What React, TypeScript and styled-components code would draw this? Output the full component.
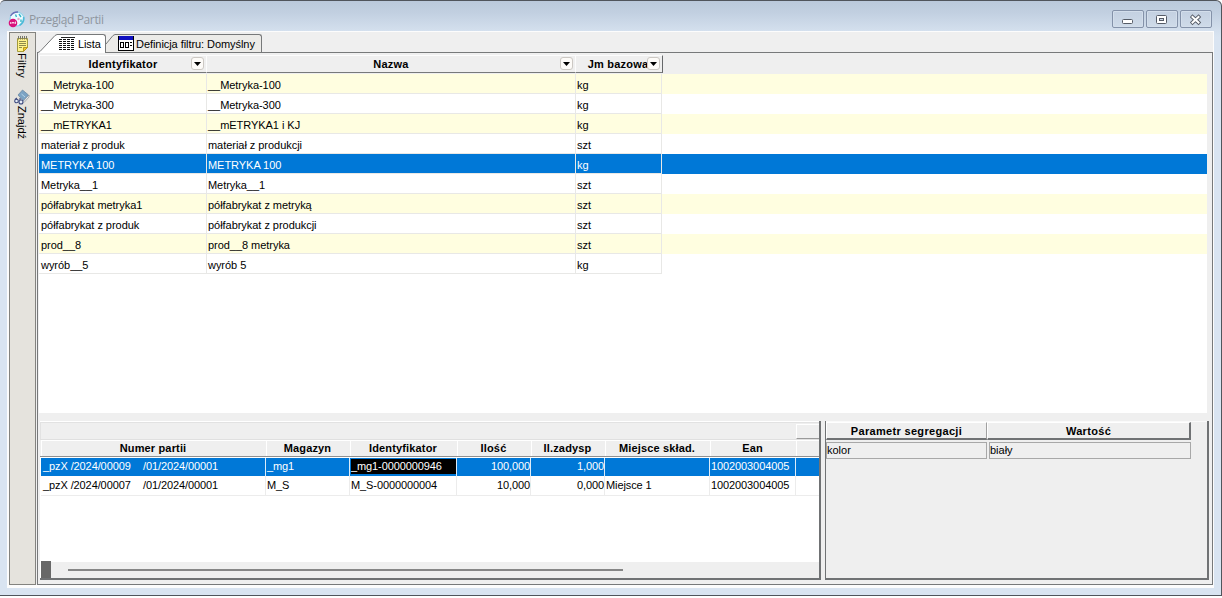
import React from "react";
import styled, { createGlobalStyle } from "styled-components";

const Global = createGlobalStyle`
  *, *::before, *::after { box-sizing: border-box; }
  body { margin: 0; background: #fff; overflow: hidden; }
`;

const Window = styled.div`
  width: 1222px;
  height: 596px;
  display: flex;
  flex-direction: column;
  padding: 0 7px 7px 7px;
  border: solid #50555c;
  border-width: 1px 1px 1px 0;
  border-radius: 5px 6px 0 0;
  background: linear-gradient(#bac9db 0, #c2d0e1 12px, #d3dfed 29px, #d9e4f1 36px);
  font-family: "Liberation Sans", Arial, sans-serif;
  font-size: 11px;
  color: #000;
`;

const TitleBar = styled.header`
  height: 30px;
  flex: none;
  display: flex;
  align-items: center;
  padding: 7px 2px 0 1px;
`;

const Title = styled.h1`
  flex: 1;
  margin: 0 0 0 4px;
  font: 400 12px "Open Sans", sans-serif;
  letter-spacing: -0.38px;
  line-height: 20px;
  color: #8f969f;
`;

const WindowButtons = styled.div`
  display: flex;
  gap: 2px;
`;

const WindowButton = styled.button`
  width: 32px;
  height: 18px;
  margin-top: -1px;
  padding: 1px 0 0;
  display: flex;
  align-items: center;
  justify-content: center;
  border: 1px solid #8492a9;
  border-radius: 2px;
  background: linear-gradient(#c3d0e1, #cfdbe9);
  box-shadow: inset 0 0 0 1px #d3deeb;
`;

const Client = styled.div`
  flex: 1;
  min-height: 0;
  display: flex;
  background: #efefef;
  border: solid #fcfcfc;
  border-width: 1px 1px 3px 2px;
`;

const Sidebar = styled.nav`
  width: 27px;
  display: flex;
  flex-direction: column;
  align-items: center;
  padding: 3px 1px 0 0;
  background: #e5e3dd;
  border: 1px solid #83837f;
`;

const SideItem = styled.div<{ $top?: number }>`
  display: flex;
  flex-direction: column;
  align-items: center;
  margin-top: ${(p) => p.$top ?? 0}px;
`;

const SideLabel = styled.span<{ $spacing: number }>`
  writing-mode: vertical-rl;
  line-height: 14px;
  margin-top: 1px;
  letter-spacing: ${(p) => p.$spacing}px;
`;

const Main = styled.main`
  flex: 1;
  min-width: 0;
  display: flex;
  flex-direction: column;
  padding-left: 1px;
`;

const TabStrip = styled.div`
  height: 20px;
  flex: none;
  display: flex;
  align-items: flex-end;
  padding-left: 1px;
`;

const TabSlope = styled.svg<{ $over?: boolean }>`
  display: block;
  flex: none;
  position: relative;
  z-index: 1;
  margin-bottom: ${(p) => (p.$over ? -1 : 0)}px;
`;

const Tab = styled.div<{ $active?: boolean }>`
  position: relative;
  z-index: ${(p) => (p.$active ? 1 : 0)};
  height: ${(p) => (p.$active ? 19 : 18)}px;
  margin-bottom: ${(p) => (p.$active ? -1 : 0)}px;
  width: ${(p) => (p.$active ? 49 : 147)}px;
  padding-left: ${(p) => (p.$active ? 2 : 3)}px;
  display: flex;
  align-items: center;
  background: ${(p) => (p.$active ? "#fff" : "#ecebe8")};
  border: solid #77797a;
  border-width: 1px 1px 0 0;
  border-radius: 0 3px 0 0;
`;

const TabText = styled.span<{ $left: number; $spacing: number }>`
  margin-left: ${(p) => p.$left}px;
  line-height: 14px;
  letter-spacing: ${(p) => p.$spacing}px;
  white-space: nowrap;
`;

const Page = styled.section`
  flex: 1;
  min-height: 0;
  display: flex;
  flex-direction: column;
  border: 1px solid #77797a;
  padding: 1px 5px 4px 1px;
`;

const Grid = styled.div`
  height: 359px;
  flex: none;
  background: #fff;
`;

const GridHeader = styled.div`
  display: flex;
  height: 20px;
  background: #efefef;
  padding-top: 1px;
`;

const GridHeadCell = styled.div<{ $w: number; $last?: boolean }>`
  width: ${(p) => p.$w}px;
  height: 18px;
  position: relative;
  display: flex;
  align-items: center;
  justify-content: center;
  font-weight: bold;
  letter-spacing: 0.22px;
  white-space: nowrap;
  overflow: hidden;
  border: solid #fcfcfc;
  border-width: 1px 0 1.5px 1px;
  border-bottom-color: #77797a;
  ${(p) => p.$last && "border-right: 1px solid #66686a; padding-right: 2px;"}
`;

const FilterButton = styled.button`
  position: absolute;
  right: 2px;
  top: 1px;
  width: 13px;
  height: 13px;
  padding: 0;
  display: flex;
  align-items: center;
  justify-content: center;
  background: #fdfbf8;
  border: 1px solid #ccc8c3;
  border-radius: 3px;
`;

const GridRow = styled.div<{ $tone: "odd" | "even" | "selected" }>`
  display: flex;
  height: 20px;
  background: ${(p) => ({ odd: "#fffee0", even: "#fff", selected: "#0078d7" })[p.$tone]};
  color: ${(p) => (p.$tone === "selected" ? "#fff" : "#000")};
`;

const GridCell = styled.div<{ $w: number; $first?: boolean }>`
  width: ${(p) => p.$w}px;
  padding-left: ${(p) => (p.$first ? 2 : 1)}px;
  padding-top: 1px;
  line-height: 21px;
  letter-spacing: -0.04px;
  white-space: pre;
  border: solid #e8e8e6;
  border-width: 0 1px 1px 0;
`;

const Lower = styled.div`
  flex: 1;
  min-height: 0;
  display: flex;
  gap: 4px;
  padding-top: 8px;
  padding-left: 1px;
  margin-right: -2px;
`;

const Batches = styled.div`
  width: 781px;
  display: flex;
  flex-direction: column;
  border: solid #707274;
  border-width: 0 2px 2px 0;
  background: #fff;
`;

const BatchBand = styled.div`
  height: 18px;
  display: flex;
  justify-content: flex-end;
  padding-top: 3px;
  background: #efefef;
  box-shadow: inset 0 1px #fff, inset 1px 2px #e2e2e2;
`;

const BandBox = styled.div`
  width: 23px;
  height: 15px;
  border: solid #fff;
  border-width: 1px 0 1px 1px;
  border-bottom-color: #9a9a9a;
`;

const BatchHeader = styled.div`
  display: flex;
  height: 18px;
  padding-left: 1px;
  background: #efefef;
  border-bottom: 1px solid #8f8f8f;
  border-top: 1px solid #e0e0e0;
`;

const BatchHeadCell = styled.div<{ $w: number }>`
  width: ${(p) => p.$w}px;
  padding-right: 2px;
  line-height: 15px;
  text-align: center;
  font-weight: bold;
  letter-spacing: 0.15px;
  white-space: nowrap;
  border-left: 1px solid #fff;
  border-top: 1px solid #fff;
`;

const BatchRow = styled.div<{ $selected?: boolean }>`
  display: flex;
  height: ${(p) => (p.$selected ? 18 : 20)}px;
  margin: ${(p) => (p.$selected ? "1px 0 0 1px" : "0 0 0 1px")};
  line-height: ${(p) => (p.$selected ? 16 : 18)}px;
  background: ${(p) => (p.$selected ? "#0078d7" : "#fff")};
  color: ${(p) => (p.$selected ? "#fff" : "#000")};
  border-bottom: ${(p) => (p.$selected ? "none" : "1px solid #ececec")};
`;

const BatchCell = styled.div<{ $w: number; $right?: boolean; $focus?: boolean; $light?: boolean }>`
  width: ${(p) => p.$w}px;
  padding-left: 1px;
  letter-spacing: -0.1px;
  text-align: ${(p) => (p.$right ? "right" : "left")};
  white-space: pre;
  border-right: 1px solid ${(p) => (p.$light ? "#dcecf8" : "#ececec")};
  ${(p) => p.$focus && "background: #000; box-shadow: inset 0 -2px #0078d7, inset 1px 1px #0078d7;"}
`;

const BatchNumber = styled.span`
  display: inline-block;
  width: 100px;
  padding-left: 1px;
`;

const ScrollArea = styled.div`
  height: 16px;
  margin-top: auto;
  margin-left: 1px;
  display: flex;
  align-items: center;
  background: #efefef;
`;

const ScrollBlock = styled.div`
  width: 10px;
  height: 17px;
  margin-top: -1px;
  background: #686868;
`;

const ScrollThumb = styled.div`
  width: 555px;
  height: 2px;
  margin-left: 17px;
  background: #868686;
`;

const Params = styled.div`
  flex: 1;
  border: solid #707274;
  border-width: 0 2px 2px 1px;
  box-shadow: inset 0 1px #fafafa;
  padding-top: 1px;
`;

const ParamHeader = styled.div`
  display: flex;
  height: 18px;
`;

const ParamHeadCell = styled.div<{ $w: number; $last?: boolean }>`
  width: ${(p) => p.$w}px;
  line-height: 16px;
  text-align: center;
  font-weight: bold;
  letter-spacing: 0.32px;
  border: solid #fff;
  border-width: 1px ${(p) => (p.$last ? 2 : 1)}px 2px 1px;
  border-right-color: ${(p) => (p.$last ? "#707274" : "#a0a0a0")};
  border-bottom-color: #707274;
`;

const ParamRow = styled.div`
  display: flex;
  gap: 2px;
  margin-top: 2px;
`;

const ParamField = styled.div<{ $w: number }>`
  width: ${(p) => p.$w}px;
  height: 17px;
  line-height: 15px;
  border: 1px solid #a8a8a8;
`;

const columns = [
  { label: "Identyfikator", w: 168, headW: 167 },
  { label: "Nazwa", w: 369, headW: 369 },
  { label: "Jm bazowa", w: 86, headW: 88 },
];

const items = [
  ["__Metryka-100", "__Metryka-100", "kg"],
  ["__Metryka-300", "__Metryka-300", "kg"],
  ["__mETRYKA1", "__mETRYKA1 i KJ", "kg"],
  ["materiał z produk", "materiał z produkcji", "szt"],
  ["METRYKA 100", "METRYKA 100", "kg"],
  ["Metryka__1", "Metryka__1", "szt"],
  ["półfabrykat metryka1", "półfabrykat z metryką", "szt"],
  ["półfabrykat z produk", "półfabrykat z produkcji", "szt"],
  ["prod__8", "prod__8 metryka", "szt"],
  ["wyrób__5", "wyrób 5", "kg"],
];
const selectedItem = 4;

const batchColumns = [
  { label: "Numer partii", w: 225 },
  { label: "Magazyn", w: 84 },
  { label: "Identyfikator", w: 107 },
  { label: "Ilość", w: 74, right: true },
  { label: "Il.zadysp", w: 74, right: true },
  { label: "Miejsce skład.", w: 105 },
  { label: "Ean", w: 86 },
];

const batches = [
  [["_pzX /2024/00009", "/01/2024/00001"], "_mg1", "_mg1-0000000946", "100,000", "1,000", "", "1002003004005"],
  [["_pzX /2024/00007", "/01/2024/00001"], "M_S", "M_S-0000000004", "10,000", "0,000", "Miejsce 1", "1002003004005"],
];

const AppIcon = () => (
  <svg width="17" height="17" viewBox="0 0 17 17">
    <circle cx="9" cy="8" r="7" fill="#eefaff" stroke="#7fd0ea" strokeWidth="1" />
    <path d="M2.5 5Q5 .8 10 1" fill="none" stroke="#6a6fb8" strokeWidth="1.3" />
    <path d="M15.6 6Q16.4 11 11.5 14.4" fill="none" stroke="#4db9d8" strokeWidth="1.6" />
    <path d="M11 3l2 3M7.5 3.5l1 2.5M13 8.5v2.5" stroke="#37b7c9" strokeWidth="1.4" />
    <circle cx="10.5" cy="8" r="1.2" fill="#e3a8c8" />
    <circle cx="5" cy="12" r="4.3" fill="#d8127c" />
    <path d="M2.5 11v2M4 13v-2l1 1 1-1v2M7 11h1M7.5 11v2" stroke="#fff" strokeWidth=".7" fill="none" />
  </svg>
);

const NoteIcon = () => (
  <svg width="13" height="16" viewBox="0 0 13 16">
    <path d="M1.5 2.5h10v9l-4 4h-6z" fill="#fff38a" stroke="#a39a3a" />
    <path d="M11.5 11.5h-4v4z" fill="#f5c828" stroke="#b79a20" />
    <path d="M3 5.5h7M3 7.5h7M3 9.5h7M3 11.5h3" stroke="#8e8b4a" />
    <path d="M2.5 0v3.5M4.5 0v3.5M6.5 0v3.5M8.5 0v3.5M10.5 0v3.5" stroke="#77776a" />
  </svg>
);

const FindIcon = () => (
  <svg width="16" height="16" viewBox="0 0 16 16">
    <path d="M8.5 1l6 5-5 6-5.5-6z" fill="#7ba3c4" stroke="#6f8ba3" strokeWidth=".8" />
    <path d="M9.5 12l5.5-6v2l-5 5.5" fill="#fff" stroke="#8a949c" strokeWidth=".8" />
    <path d="M7.5 5l3.5 3" stroke="#b6d4e6" />
    <circle cx="2.5" cy="12" r="1.8" fill="#e8eef8" stroke="#3c4a7e" strokeWidth="1.1" />
    <circle cx="7" cy="13" r="2" fill="#e8eef8" stroke="#3c4a7e" strokeWidth="1.1" />
    <path d="M1 10.5l2-1.5M6 11V9" stroke="#3c4a7e" strokeWidth="1.1" />
  </svg>
);

const ListIcon = () => (
  <svg width="16" height="14" viewBox="0 0 16 14" shapeRendering="crispEdges">
    <path d="M2 .5h14" stroke="#222" />
    <path
      d="M0 2.5h16M0 4.5h16M0 6.5h16M0 8.5h16M0 10.5h16M0 12.5h16"
      stroke="#111"
      strokeDasharray="3 1"
    />
  </svg>
);

const FilterIcon = () => (
  <svg width="16" height="16" viewBox="0 0 16 16" shapeRendering="crispEdges">
    <rect x=".5" y=".5" width="15" height="14" fill="#fff" stroke="#000" />
    <rect x="1" y="0" width="14" height="4" fill="#1010c0" />
    <path d="M2.5 6.5h3v5h-3zM7.5 6.5h3v5h-3z" fill="#fff" stroke="#000" />
    <path d="M12 6.5h2M12 9.5h2" stroke="#000" />
  </svg>
);

const Arrow = () => (
  <svg width="7" height="4" viewBox="0 0 7 4">
    <path d="M0 0h7L3.5 4z" fill="#000" />
  </svg>
);

export default function App() {
  return (
    <>
      <Global />
      <Window>
        <TitleBar>
          <AppIcon />
          <Title>Przegląd Partii</Title>
          <WindowButtons>
            <WindowButton aria-label="Minimize">
              <svg width="12" height="12" viewBox="0 0 12 12">
                <rect x=".5" y="5.5" width="10" height="4" rx="1" fill="#fff" stroke="#555b66" />
              </svg>
            </WindowButton>
            <WindowButton aria-label="Maximize">
              <svg width="12" height="12" viewBox="0 0 12 12">
                <rect x=".5" y="1.5" width="10" height="8" rx="1" fill="#fff" stroke="#555b66" />
                <rect x="3.5" y="4.5" width="4" height="2" fill="#c9d5e4" stroke="#555b66" />
              </svg>
            </WindowButton>
            <WindowButton aria-label="Close">
              <svg width="12" height="12" viewBox="0 0 12 12">
                <path d="M2.5 3l6 5.5M8.5 3l-6 5.5" stroke="#555b66" strokeWidth="3.8" strokeLinecap="square" />
                <path d="M2.5 3l6 5.5M8.5 3l-6 5.5" stroke="#fff" strokeWidth="2" strokeLinecap="square" />
              </svg>
            </WindowButton>
          </WindowButtons>
        </TitleBar>
        <Client>
          <Sidebar>
            <SideItem>
              <NoteIcon />
              <SideLabel $spacing={0.2}>Filtry</SideLabel>
            </SideItem>
            <SideItem $top={11}>
              <FindIcon />
              <SideLabel $spacing={0}>Znajdź</SideLabel>
            </SideItem>
          </Sidebar>
          <Main>
            <TabStrip>
              <TabSlope $over width="19" height="19" viewBox="0 0 19 19">
                <path d="M0 18.5L2 17.5L17 1.5L19 .5V19H0z" fill="#fff" />
                <path d="M0 18.5L2 17.5L17 1.5L19 .5" fill="none" stroke="#77797a" />
              </TabSlope>
              <Tab $active>
                <ListIcon />
                <TabText $left={3} $spacing={-0.1}>Lista</TabText>
              </Tab>
              <TabSlope width="9" height="18" viewBox="0 0 9 18">
                <path d="M0 10L7 1.5L9 .5V18H0z" fill="#ecebe8" />
                <path d="M0 10L7 1.5L9 .5" fill="none" stroke="#77797a" />
              </TabSlope>
              <Tab>
                <FilterIcon />
                <TabText $left={2} $spacing={-0.06}>Definicja filtru: Domyślny</TabText>
              </Tab>
            </TabStrip>
            <Page>
              <Grid>
                <GridHeader>
                  {columns.map((c, i) => (
                    <GridHeadCell key={c.label} $w={c.headW} $last={i === 2}>
                      {c.label}
                      <FilterButton aria-label={c.label}>
                        <Arrow />
                      </FilterButton>
                    </GridHeadCell>
                  ))}
                </GridHeader>
                {items.map((row, r) => (
                  <GridRow key={r} $tone={r === selectedItem ? "selected" : r % 2 ? "even" : "odd"}>
                    {row.map((text, i) => (
                      <GridCell key={i} $w={columns[i].w} $first={i === 0}>
                        {text}
                      </GridCell>
                    ))}
                  </GridRow>
                ))}
              </Grid>
              <Lower>
                <Batches>
                  <BatchBand>
                    <BandBox />
                  </BatchBand>
                  <BatchHeader>
                    {batchColumns.map((c) => (
                      <BatchHeadCell key={c.label} $w={c.w}>
                        {c.label}
                      </BatchHeadCell>
                    ))}
                    <BatchHeadCell $w={23} />
                  </BatchHeader>
                  {batches.map((row, r) => (
                    <BatchRow key={r} $selected={r === 0}>
                      {row.map((value, i) => (
                        <BatchCell
                          key={i}
                          $w={batchColumns[i].w}
                          $right={batchColumns[i].right}
                          $focus={r === 0 && i === 2}
                          $light={r === 0}
                        >
                          {Array.isArray(value)
                            ? value.map((part) => <BatchNumber key={part}>{part}</BatchNumber>)
                            : value}
                        </BatchCell>
                      ))}
                    </BatchRow>
                  ))}
                  <ScrollArea>
                    <ScrollBlock />
                    <ScrollThumb />
                  </ScrollArea>
                </Batches>
                <Params>
                  <ParamHeader>
                    <ParamHeadCell $w={161}>Parametr segregacji</ParamHeadCell>
                    <ParamHeadCell $w={204} $last>
                      Wartość
                    </ParamHeadCell>
                  </ParamHeader>
                  <ParamRow>
                    <ParamField $w={161}>kolor</ParamField>
                    <ParamField $w={202}>biały</ParamField>
                  </ParamRow>
                </Params>
              </Lower>
            </Page>
          </Main>
        </Client>
      </Window>
    </>
  );
}
